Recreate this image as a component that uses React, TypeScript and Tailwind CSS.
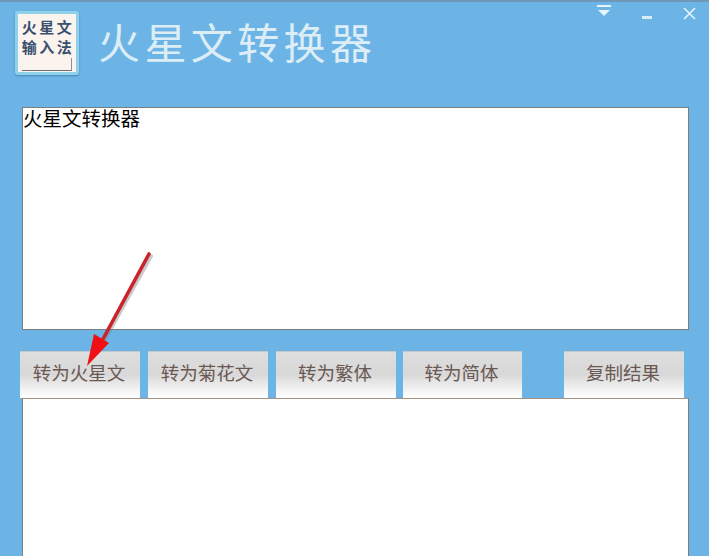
const cjk = "font-['Noto_Sans_CJK_SC','Noto_Sans_CJK_SC',sans-serif]"

const buttons = [
  { label: "转为火星文", width: "w-[120px]", gap: "mr-2" },
  { label: "转为菊花文", width: "w-[120px]", gap: "mr-2" },
  { label: "转为繁体", width: "w-[120px]", gap: "mr-[7px]" },
  { label: "转为简体", width: "w-[119px]", gap: "mr-[42px]" },
  { label: "复制结果", width: "w-[120px]", gap: "" },
]

function Logo() {
  return (
    <div className="w-[64px] h-[64px] rounded-[3px] bg-[#faf3ee] border-[3px] border-[#8fd0ea] flex flex-col items-center pt-[3px] shadow-[0_1px_2px_rgba(40,90,130,0.5)]">
      <div className="text-[15px] leading-[20px] font-bold text-[#39506e] tracking-[2.5px] pl-[2px] whitespace-nowrap">火星文</div>
      <div className="text-[15px] leading-[20px] font-bold text-[#39506e] tracking-[2.5px] pl-[2px] whitespace-nowrap">输入法</div>
      <div className="flex items-end w-[50px] mt-[1px] h-[13px]">
        <div className="flex-1 border-b border-[#6b6f78]" />
        <div className="w-px h-[13px] bg-[#8a8f98]" />
      </div>
    </div>
  )
}

function WindowControls() {
  return (
    <div className="flex items-start">
      <svg width="14" height="14" viewBox="0 0 14 14" className="mt-[3px] mr-[31px]">
        <rect x="0" y="0" width="14" height="2" fill="#e8f4fb" />
        <path d="M1 5 H13 L7 11 Z" fill="#e8f4fb" />
      </svg>
      <svg width="10" height="4" viewBox="0 0 10 4" className="mt-[14px] mr-[31px]">
        <rect x="0" y="0" width="10" height="3" fill="#dcecf6" />
      </svg>
      <svg width="13" height="13" viewBox="0 0 13 13" className="mt-[5px]">
        <path d="M1 1 L12 12 M12 1 L1 12" stroke="#e8f4fb" strokeWidth="1.6" fill="none" />
      </svg>
    </div>
  )
}

export default function App() {
  return (
    <div className={`relative w-[709px] h-[556px] overflow-hidden bg-[#6cb4e6] border-t-2 border-[#6e97b8] ${cjk}`}>
      <div className="flex items-start justify-between pl-[15px] pr-[13px] h-[105px]">
        <div className="flex items-start pt-[9px]">
          <Logo />
          <h1 className="ml-[19px] mt-[5px] text-[42px] leading-[50px] text-[#dcedf6] tracking-[4.4px] font-normal whitespace-nowrap">
            火星文转换器
          </h1>
        </div>
        <WindowControls />
      </div>

      <div className="ml-[22px] w-[667px] h-[223px] bg-white border border-[#7d7d7d] text-[19.5px] leading-[20px] text-black">
        火星文转换器
      </div>

      <div className="flex pl-[20px] mt-[21px] h-[47px]">
        {buttons.map((b) => (
          <button
            key={b.label}
            className={`${b.width} ${b.gap} h-[47px] border-t border-[#c8c8c8] bg-[linear-gradient(#dedede_0%,#d8d8d8_50%,#e2e2e2_60%,#fcfcfc_95%)] text-[18.5px] text-[#6a5852] whitespace-nowrap pb-[4px] pr-[2px]`}
          >
            {b.label}
          </button>
        ))}
      </div>

      <div className="ml-[22px] w-[667px] h-[170px] bg-white border border-[#7d7d7d] border-t-[#a5927f]" />

      <svg width="90" height="125" viewBox="0 0 90 125" className="absolute left-[75px] top-[247px]">
        <path d="M74 5 L28 88" stroke="#7a7a7a" strokeOpacity="0.4" strokeWidth="4" strokeLinecap="round" transform="translate(2 2)" />
        <path d="M74 5 L28 90" stroke="#c9242c" strokeWidth="3.6" strokeLinecap="round" fill="none" />
        <path d="M12 117 L19 85 L34 94 Z" fill="#f00f14" />
      </svg>
    </div>
  )
}
